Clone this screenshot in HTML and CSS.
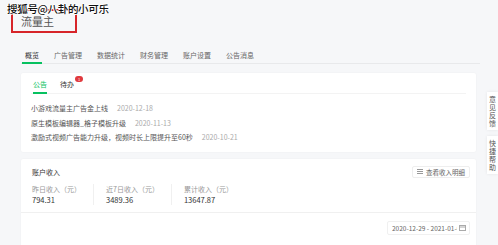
FILE: index.html
```html
<!DOCTYPE html>
<html lang="zh">
<head>
<meta charset="utf-8">
<link rel="stylesheet" href="styles.css">
</head>
<body>
<div class="page">
  <div class="watermark">搜狐号@八卦的小可乐</div>
  <div class="brand"><span>流量主</span></div>
  <nav class="tabs">
    <span class="tab active">概览</span>
    <span class="tab">广告管理</span>
    <span class="tab">数据统计</span>
    <span class="tab">财务管理</span>
    <span class="tab">账户设置</span>
    <span class="tab">公告消息</span>
  </nav>
  <section class="card notice">
    <div class="subtabs">
      <span class="subtab active">公告</span>
      <span class="subtab">待办<i class="badge">1</i></span>
    </div>
    <ul class="list">
      <li>小游戏流量主广告金上线<span class="date">2020-12-18</span></li>
      <li>原生模板编辑器_格子模板升级<span class="date">2020-11-13</span></li>
      <li>激励式视频广告能力升级，视频时长上限提升至60秒<span class="date">2020-10-21</span></li>
    </ul>
  </section>
  <section class="card income">
    <div class="income-head">
      <span class="title">账户收入</span>
      <span class="btn"><svg width="6" height="5" viewBox="0 0 6 5"><rect x="0" y="0" width="6" height="1" fill="#999"/><rect x="0" y="2" width="6" height="1" fill="#999"/><rect x="0" y="4" width="6" height="1" fill="#999"/></svg>查看收入明细</span>
    </div>
    <div class="stats">
      <div class="stat"><div class="label">昨日收入（元）</div><div class="value">794.31</div></div>
      <div class="stat"><div class="label">近7日收入（元）</div><div class="value">3489.36</div></div>
      <div class="stat last"><div class="label">累计收入（元）</div><div class="value">13647.87</div></div>
    </div>
    <div class="range-row">
      <span class="range"><span class="range-text">2020-12-29 - 2021-01-0</span><svg width="7" height="7" viewBox="0 0 7 7"><rect x="0.5" y="1.5" width="6" height="5" fill="none" stroke="#aaa"/><line x1="0.5" y1="3" x2="6.5" y2="3" stroke="#aaa"/></svg></span>
    </div>
  </section>
  <aside class="float">
    <div class="float-item">意见反馈</div>
    <div class="float-item">快捷帮助</div>
  </aside>
</div>
</body>
</html>
```
FILE: styles.css
```css
* { box-sizing: border-box; margin: 0; padding: 0; }
html, body { width: 498px; height: 245px; overflow: hidden; }
body {
  background: #f6f7f9;
  font-family: "Noto Sans CJK SC", "Noto Sans", sans-serif;
  color: #555;
}
.page { position: relative; height: 245px; padding-top: 9px; }
.watermark {
  position: absolute; left: 7px; top: 1px;
  font-size: 10.5px; line-height: 15px; color: #111; font-weight: 500;
  letter-spacing: -0.3px;
  text-shadow: 1px 0 0 #fff, -1px 0 0 #fff, 0 1px 0 #fff, 0 -1px 0 #fff;
  z-index: 3;
}
.brand {
  margin-left: 11px; width: 66px; height: 24px;
  border: 2px solid #d7252a;
  padding-left: 8px;
  font-size: 11px; line-height: 20px; color: #555;
  display: flex; align-items: center;
}
.tabs {
  margin: 16px 0 0 21px; width: 459px;
  display: flex; gap: 9px;
  border-bottom: 1px solid #e8e9eb;
  padding-left: 1px;
}
.tab {
  font-size: 7px; line-height: 10px; color: #666;
  padding: 1px 3px 2px;
  border-bottom: 2px solid transparent;
  margin-bottom: -1px;
}
.tab.active { color: #333; border-bottom-color: #07c160; }
.card {
  margin-left: 21px; width: 455px;
  background: #fff;
  border-radius: 2px;
  box-shadow: 0 0 2px rgba(0,0,0,0.05);
}
.notice { margin-top: 9px; padding: 6px 10px 7px; }
.subtabs { display: flex; gap: 13px; border-bottom: 1px solid #f3f3f3; padding-left: 2px; }
.subtab {
  position: relative;
  font-size: 7px; line-height: 10px; color: #333;
  padding-bottom: 3px;
  border-bottom: 2px solid transparent;
  margin-bottom: -1px;
}
.subtab.active { color: #07c160; border-bottom-color: #07c160; }
.badge {
  position: absolute; left: 15px; top: -3px;
  width: 8px; height: 6px; border-radius: 3px;
  background: #e0393e; color: #fff;
  font-size: 4px; line-height: 6px; font-style: normal; text-align: center;
}
.list { list-style: none; padding-top: 7px; }
.list li { font-size: 7px; line-height: 14.5px; color: #555; }
.date { color: #aaa; margin-left: 9px; }
.income { margin-top: 7px; padding-top: 7px; height: 88px; }
.income-head {
  display: flex; justify-content: space-between; align-items: center;
  padding: 0 6px 0 11px;
}
.title { font-size: 7px; line-height: 12px; color: #333; }
.btn {
  display: flex; align-items: center; gap: 3px;
  height: 12px; padding: 0 4px;
  border: 1px solid #eee; border-radius: 2px;
  font-size: 6.5px; color: #666;
}
.stats { display: flex; padding: 6px 0 0 11px; }
.stat {
  min-width: 50px; padding-right: 12px; margin-right: 12px;
  border-right: 1px solid #f0f0f0;
}
.stat.last { border-right: none; }
.label { font-size: 7px; line-height: 11px; color: #999; }
.value { font-size: 7.5px; line-height: 10px; color: #333; }
.range-row {
  margin-top: 7px; border-top: 1px solid #f0f0f0;
  display: flex; justify-content: flex-end; padding: 8px 6px 0 0;
}
.range {
  display: flex; align-items: center; gap: 2px;
  width: 83px; height: 14px; padding: 0 3px 0 4px;
  border: 1px solid #f0f0f0; border-radius: 2px;
  font-size: 6.5px; color: #666; overflow: hidden;
}
.range-text { white-space: nowrap; overflow: hidden; flex: 1; }
.float {
  position: absolute; left: 487px; top: 92px;
  display: flex; flex-direction: column; gap: 6px;
}
.float-item {
  width: 11px; background: #fff;
  box-shadow: 0 0 3px rgba(0,0,0,0.08);
  padding: 3px 0 3px 2px;
  font-size: 7px; line-height: 8px; color: #555;
  word-break: break-all;
  height: 38px;
}
```
